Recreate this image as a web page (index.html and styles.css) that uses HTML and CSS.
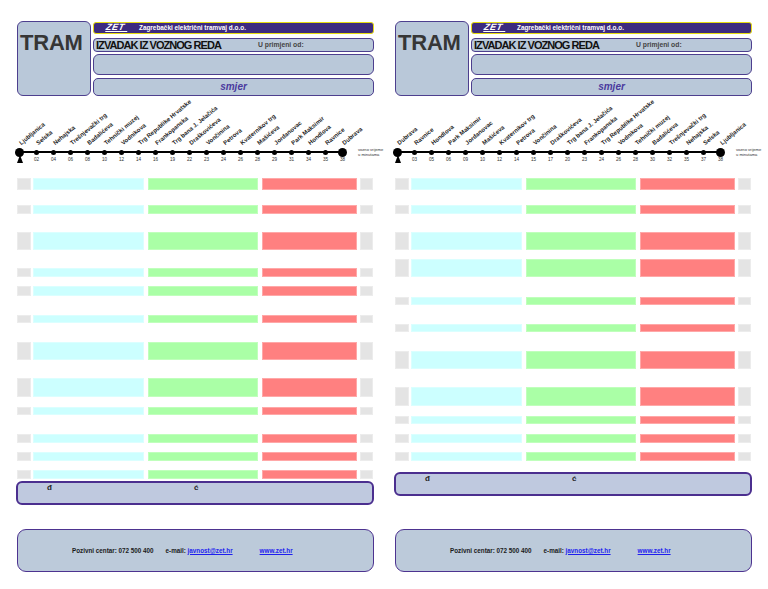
FILE: index.html
```html
<!DOCTYPE html>
<html lang="hr">
<head>
<meta charset="utf-8">
<title>TRAM - izvadak iz voznog reda</title>
<link rel="stylesheet" href="styles.css">
</head>
<body>
<div class="page">

  <section class="panel">
    <div class="head">
      <div class="tram">TRAM</div>
      <div class="hcol">
        <div class="banner"><span class="logo">ZET</span><span class="company">Zagrebački električni tramvaj d.o.o.</span></div>
        <div class="hbox title"><span class="izv">IZVADAK IZ VOZNOG REDA</span><span class="od">U primjeni od:</span></div>
        <div class="hbox blank"></div>
        <div class="hbox smjer">smjer</div>
      </div>
    </div>

    <div class="route">
      <div class="stops">
        <div class="stop first"><div class="lbl"><span>Ljubljanica</span></div><div class="node"><i></i></div><div class="tri"></div></div>
        <div class="stop"><div class="lbl"><span>Selska</span></div><div class="node"><i></i></div><div class="num">02</div></div>
        <div class="stop"><div class="lbl"><span>Nehajska</span></div><div class="node"><i></i></div><div class="num">04</div></div>
        <div class="stop"><div class="lbl"><span>Trešnjevački trg</span></div><div class="node"><i></i></div><div class="num">06</div></div>
        <div class="stop"><div class="lbl"><span>Badalićeva</span></div><div class="node"><i></i></div><div class="num">08</div></div>
        <div class="stop"><div class="lbl"><span>Tehnički muzej</span></div><div class="node"><i></i></div><div class="num">10</div></div>
        <div class="stop"><div class="lbl"><span>Vodnikova</span></div><div class="node"><i></i></div><div class="num">12</div></div>
        <div class="stop"><div class="lbl"><span>Trg Republike Hrvatske</span></div><div class="node"><i></i></div><div class="num">14</div></div>
        <div class="stop"><div class="lbl"><span>Frankopanska</span></div><div class="node"><i></i></div><div class="num">16</div></div>
        <div class="stop"><div class="lbl"><span>Trg bana J. Jelačića</span></div><div class="node"><i></i></div><div class="num">19</div></div>
        <div class="stop"><div class="lbl"><span>Draškovićeva</span></div><div class="node"><i></i></div><div class="num">22</div></div>
        <div class="stop"><div class="lbl"><span>Vončinina</span></div><div class="node"><i></i></div><div class="num">23</div></div>
        <div class="stop"><div class="lbl"><span>Petrova</span></div><div class="node"><i></i></div><div class="num">24</div></div>
        <div class="stop"><div class="lbl"><span>Kvaternikov trg</span></div><div class="node"><i></i></div><div class="num">26</div></div>
        <div class="stop"><div class="lbl"><span>Mašićeva</span></div><div class="node"><i></i></div><div class="num">28</div></div>
        <div class="stop"><div class="lbl"><span>Jordanovac</span></div><div class="node"><i></i></div><div class="num">29</div></div>
        <div class="stop"><div class="lbl"><span>Park Maksimir</span></div><div class="node"><i></i></div><div class="num">31</div></div>
        <div class="stop"><div class="lbl"><span>Hondlova</span></div><div class="node"><i></i></div><div class="num">34</div></div>
        <div class="stop"><div class="lbl"><span>Ravnice</span></div><div class="node"><i></i></div><div class="num">35</div></div>
        <div class="stop last"><div class="lbl"><span>Dubrava</span></div><div class="node"><i></i></div><div class="num">38</div></div>
      </div>
      <div class="note">vozno vrijeme<br>u minutama</div>
    </div>

    <div class="rows">
      <div class="row m g8"><b class="x1"></b><b class="cy"></b><b class="gn"></b><b class="rd"></b><b class="x2"></b></div>
      <div class="row s g15"><b class="x1"></b><b class="cy"></b><b class="gn"></b><b class="rd"></b><b class="x2"></b></div>
      <div class="row l g18"><b class="x1"></b><b class="cy"></b><b class="gn"></b><b class="rd"></b><b class="x2"></b></div>
      <div class="row s g18"><b class="x1"></b><b class="cy"></b><b class="gn"></b><b class="rd"></b><b class="x2"></b></div>
      <div class="row s10 g9"><b class="x1"></b><b class="cy"></b><b class="gn"></b><b class="rd"></b><b class="x2"></b></div>
      <div class="row s8 g19"><b class="x1"></b><b class="cy"></b><b class="gn"></b><b class="rd"></b><b class="x2"></b></div>
      <div class="row l g19"><b class="x1"></b><b class="cy"></b><b class="gn"></b><b class="rd"></b><b class="x2"></b></div>
      <div class="row l19 g18"><b class="x1"></b><b class="cy"></b><b class="gn"></b><b class="rd"></b><b class="x2"></b></div>
      <div class="row s8 g10"><b class="x1"></b><b class="cy"></b><b class="gn"></b><b class="rd"></b><b class="x2"></b></div>
      <div class="row s g19"><b class="x1"></b><b class="cy"></b><b class="gn"></b><b class="rd"></b><b class="x2"></b></div>
      <div class="row s g9"><b class="x1"></b><b class="cy"></b><b class="gn"></b><b class="rd"></b><b class="x2"></b></div>
      <div class="row s g9"><b class="x1"></b><b class="cy"></b><b class="gn"></b><b class="rd"></b><b class="x2"></b></div>
    </div>

    <div class="legend g2"><span class="d">đ</span><span class="c">ć</span></div>

    <div class="contact c24">
      <span class="tel">Pozivni centar: 072 500 400</span>
      <span class="mail">e-mail: <a href="#">javnost@zet.hr</a></span>
      <a class="web" href="#">www.zet.hr</a>
    </div>
  </section>

  <section class="panel">
    <div class="head">
      <div class="tram">TRAM</div>
      <div class="hcol">
        <div class="banner"><span class="logo">ZET</span><span class="company">Zagrebački električni tramvaj d.o.o.</span></div>
        <div class="hbox title"><span class="izv">IZVADAK IZ VOZNOG REDA</span><span class="od">U primjeni od:</span></div>
        <div class="hbox blank"></div>
        <div class="hbox smjer">smjer</div>
      </div>
    </div>

    <div class="route">
      <div class="stops">
        <div class="stop first"><div class="lbl"><span>Dubrava</span></div><div class="node"><i></i></div><div class="tri"></div></div>
        <div class="stop"><div class="lbl"><span>Ravnice</span></div><div class="node"><i></i></div><div class="num">03</div></div>
        <div class="stop"><div class="lbl"><span>Hondlova</span></div><div class="node"><i></i></div><div class="num">05</div></div>
        <div class="stop"><div class="lbl"><span>Park Maksimir</span></div><div class="node"><i></i></div><div class="num">06</div></div>
        <div class="stop"><div class="lbl"><span>Jordanovac</span></div><div class="node"><i></i></div><div class="num">09</div></div>
        <div class="stop"><div class="lbl"><span>Mašićeva</span></div><div class="node"><i></i></div><div class="num">10</div></div>
        <div class="stop"><div class="lbl"><span>Kvaternikov trg</span></div><div class="node"><i></i></div><div class="num">12</div></div>
        <div class="stop"><div class="lbl"><span>Petrova</span></div><div class="node"><i></i></div><div class="num">14</div></div>
        <div class="stop"><div class="lbl"><span>Vončinina</span></div><div class="node"><i></i></div><div class="num">15</div></div>
        <div class="stop"><div class="lbl"><span>Draškovićeva</span></div><div class="node"><i></i></div><div class="num">17</div></div>
        <div class="stop"><div class="lbl"><span>Trg bana J. Jelačića</span></div><div class="node"><i></i></div><div class="num">20</div></div>
        <div class="stop"><div class="lbl"><span>Frankopanska</span></div><div class="node"><i></i></div><div class="num">23</div></div>
        <div class="stop"><div class="lbl"><span>Trg Republike Hrvatske</span></div><div class="node"><i></i></div><div class="num">24</div></div>
        <div class="stop"><div class="lbl"><span>Vodnikova</span></div><div class="node"><i></i></div><div class="num">26</div></div>
        <div class="stop"><div class="lbl"><span>Tehnički muzej</span></div><div class="node"><i></i></div><div class="num">28</div></div>
        <div class="stop"><div class="lbl"><span>Badalićeva</span></div><div class="node"><i></i></div><div class="num">30</div></div>
        <div class="stop"><div class="lbl"><span>Trešnjevački trg</span></div><div class="node"><i></i></div><div class="num">32</div></div>
        <div class="stop"><div class="lbl"><span>Nehajska</span></div><div class="node"><i></i></div><div class="num">35</div></div>
        <div class="stop"><div class="lbl"><span>Selska</span></div><div class="node"><i></i></div><div class="num">37</div></div>
        <div class="stop last"><div class="lbl"><span>Ljubljanica</span></div><div class="node"><i></i></div><div class="num">38</div></div>
      </div>
      <div class="note">vozno vrijeme<br>u minutama</div>
    </div>

    <div class="rows">
      <div class="row m g8"><b class="x1"></b><b class="cy"></b><b class="gn"></b><b class="rd"></b><b class="x2"></b></div>
      <div class="row s g15"><b class="x1"></b><b class="cy"></b><b class="gn"></b><b class="rd"></b><b class="x2"></b></div>
      <div class="row l g18"><b class="x1"></b><b class="cy"></b><b class="gn"></b><b class="rd"></b><b class="x2"></b></div>
      <div class="row l g9"><b class="x1"></b><b class="cy"></b><b class="gn"></b><b class="rd"></b><b class="x2"></b></div>
      <div class="row s8 g20"><b class="x1"></b><b class="cy"></b><b class="gn"></b><b class="rd"></b><b class="x2"></b></div>
      <div class="row s8 g19"><b class="x1"></b><b class="cy"></b><b class="gn"></b><b class="rd"></b><b class="x2"></b></div>
      <div class="row l g19"><b class="x1"></b><b class="cy"></b><b class="gn"></b><b class="rd"></b><b class="x2"></b></div>
      <div class="row l19 g18"><b class="x1"></b><b class="cy"></b><b class="gn"></b><b class="rd"></b><b class="x2"></b></div>
      <div class="row s8 g10"><b class="x1"></b><b class="cy"></b><b class="gn"></b><b class="rd"></b><b class="x2"></b></div>
      <div class="row s g10"><b class="x1"></b><b class="cy"></b><b class="gn"></b><b class="rd"></b><b class="x2"></b></div>
      <div class="row s g9"><b class="x1"></b><b class="cy"></b><b class="gn"></b><b class="rd"></b><b class="x2"></b></div>
    </div>

    <div class="legend g11"><span class="d">đ</span><span class="c">ć</span></div>

    <div class="contact c33">
      <span class="tel">Pozivni centar: 072 500 400</span>
      <span class="mail">e-mail: <a href="#">javnost@zet.hr</a></span>
      <a class="web" href="#">www.zet.hr</a>
    </div>
  </section>

</div>
</body>
</html>
```
FILE: styles.css
```css
html, body {
  margin: 0;
  padding: 0;
  background: #ffffff;
}
body {
  font-family: "Liberation Sans", Arial, sans-serif;
  color: #222;
}
.page {
  display: flex;
  gap: 21px;
  padding: 21px 0 0 17px;
}
.panel {
  width: 357px;
  display: flex;
  flex-direction: column;
}

/* ---------- header ---------- */
.head {
  display: flex;
  gap: 2px;
  height: 75px;
}
.tram {
  width: 74px;
  box-sizing: border-box;
  border: 1.5px solid #4d3f8e;
  border-radius: 6px;
  background: #b9c8d9;
  font: bold 22px/25px "Liberation Sans", Arial, sans-serif;
  color: #363636;
  padding: 8px 0 0 2px;
  letter-spacing: -0.2px;
}
.hcol {
  flex: 1;
  display: flex;
  flex-direction: column;
}
.banner {
  height: 12px;
  margin-top: 1px;
  box-sizing: border-box;
  background: #3d2b7f;
  border: 1.5px solid #e6dc10;
  border-radius: 3px;
  display: flex;
  align-items: center;
  padding-left: 12px;
  color: #fff;
}
.logo {
  font: italic bold 9px/9px "Liberation Sans", Arial, sans-serif;
  letter-spacing: 0.5px;
  color: #fff;
  width: 22px;
  border-bottom: 1px solid #fff;
  transform: skewX(-12deg);
  line-height: 7px;
}
.company {
  margin-left: 11px;
  font: bold 6.4px/8px "Liberation Sans", Arial, sans-serif;
  color: #fff;
}
.hbox {
  box-sizing: border-box;
  border: 1.5px solid #4d3f8e;
  background: #b9c8d9;
}
.title {
  height: 14px;
  margin-top: 4px;
  border-radius: 4px;
  display: flex;
  align-items: center;
  padding-left: 2px;
}
.izv {
  font: bold 11px/12px "Liberation Sans", Arial, sans-serif;
  letter-spacing: -0.95px;
  color: #111;
  width: 162px;
}
.od {
  font: bold 6.8px/8px "Liberation Sans", Arial, sans-serif;
  color: #444;
}
.blank {
  height: 21px;
  margin-top: 2px;
  border-radius: 6px;
}
.smjer {
  height: 18px;
  margin-top: 3px;
  border-radius: 5px;
  text-align: center;
  font: italic bold 10px/15px "Liberation Sans", Arial, sans-serif;
  color: #4a3a9e;
}

/* ---------- route diagram ---------- */
.route {
  display: flex;
  height: 74px;
}
.stops {
  display: flex;
  margin-left: -6px;
}
.stop {
  width: 17px;
  display: flex;
  flex-direction: column;
}
.lbl {
  height: 51px;
  position: relative;
}
.lbl span {
  position: absolute;
  left: 11px;
  bottom: 1px;
  transform-origin: 0 100%;
  transform: rotate(-40deg);
  white-space: nowrap;
  font: bold 6px/6px "Liberation Sans", Arial, sans-serif;
  color: #1c1c1c;
}
.node {
  height: 10px;
  display: flex;
  align-items: center;
  justify-content: center;
  background: linear-gradient(#000, #000) center / 100% 2px no-repeat;
}
.stop.first .node {
  background-position: right center;
  background-size: 50% 2px;
}
.stop.last .node {
  background-position: left center;
  background-size: 50% 2px;
}
.node i {
  width: 5px;
  height: 5px;
  border-radius: 50%;
  background: #000;
}
.stop.first .node i,
.stop.last .node i {
  width: 9px;
  height: 9px;
}
.num {
  font: 4.6px/6px "Liberation Sans", Arial, sans-serif;
  text-align: center;
  color: #333;
}
.tri {
  width: 0;
  height: 0;
  border-left: 3.5px solid transparent;
  border-right: 3.5px solid transparent;
  border-bottom: 8px solid #000;
  margin: -2px auto 0;
}
.note {
  margin-left: 7px;
  padding-top: 52px;
  font: 4.1px/4.5px "Liberation Sans", Arial, sans-serif;
  color: #333;
  white-space: nowrap;
}

/* ---------- timetable rows ---------- */
.rows {
  display: flex;
  flex-direction: column;
}
.row {
  display: flex;
  height: 9px;
}
.row.s8 { height: 8px; }
.row.s { height: 9px; }
.row.s10 { height: 10px; }
.row.m { height: 12px; }
.row.l { height: 18px; }
.row.l19 { height: 19px; }
.g2 { margin-top: 2px; }
.g8 { margin-top: 8px; }
.g9 { margin-top: 9px; }
.g10 { margin-top: 10px; }
.g11 { margin-top: 11px; }
.g15 { margin-top: 15px; }
.g18 { margin-top: 18px; }
.g19 { margin-top: 19px; }
.g20 { margin-top: 20px; }
.row b {
  display: block;
  box-sizing: border-box;
}
.x1 { width: 14px; background: #e4e4e4; border: 1px solid #ececec; }
.cy { width: 111px; margin-left: 2px; background: #ccffff; border: 1px solid #dbffff; }
.gn { width: 110px; margin-left: 4px; background: #aaffa6; border: 1px solid #c0ffbc; }
.rd { width: 95px; margin-left: 4px; background: #ff8080; border: 1px solid #ffa8a8; }
.x2 { width: 13px; margin-left: 3px; background: #e4e4e4; border: 1px solid #ececec; }

/* ---------- legend box ---------- */
.legend {
  height: 24px;
  width: 358px;
  margin-left: -1px;
  box-sizing: border-box;
  border: 2px solid #4b2f8f;
  border-radius: 6px;
  background: #bfc9df;
  display: flex;
  align-items: flex-start;
  padding: 0 0 0 29px;
  font: bold 8px/10px "Liberation Sans", Arial, sans-serif;
  color: #222;
}
.legend .c {
  margin-left: 142px;
}

/* ---------- contact footer ---------- */
.contact {
  height: 43px;
  box-sizing: border-box;
  border: 1.5px solid #4d3390;
  border-radius: 9px;
  background: #bccada;
  display: flex;
  align-items: center;
  padding-left: 54px;
  font: bold 6.3px/8px "Liberation Sans", Arial, sans-serif;
  color: #1a1a1a;
}
.c24 { margin-top: 24px; }
.c33 { margin-top: 33px; }
.contact a {
  color: #1f1fee;
  text-decoration: underline;
}
.mail {
  margin-left: 12px;
}
.web {
  margin-left: 27px;
}
```
